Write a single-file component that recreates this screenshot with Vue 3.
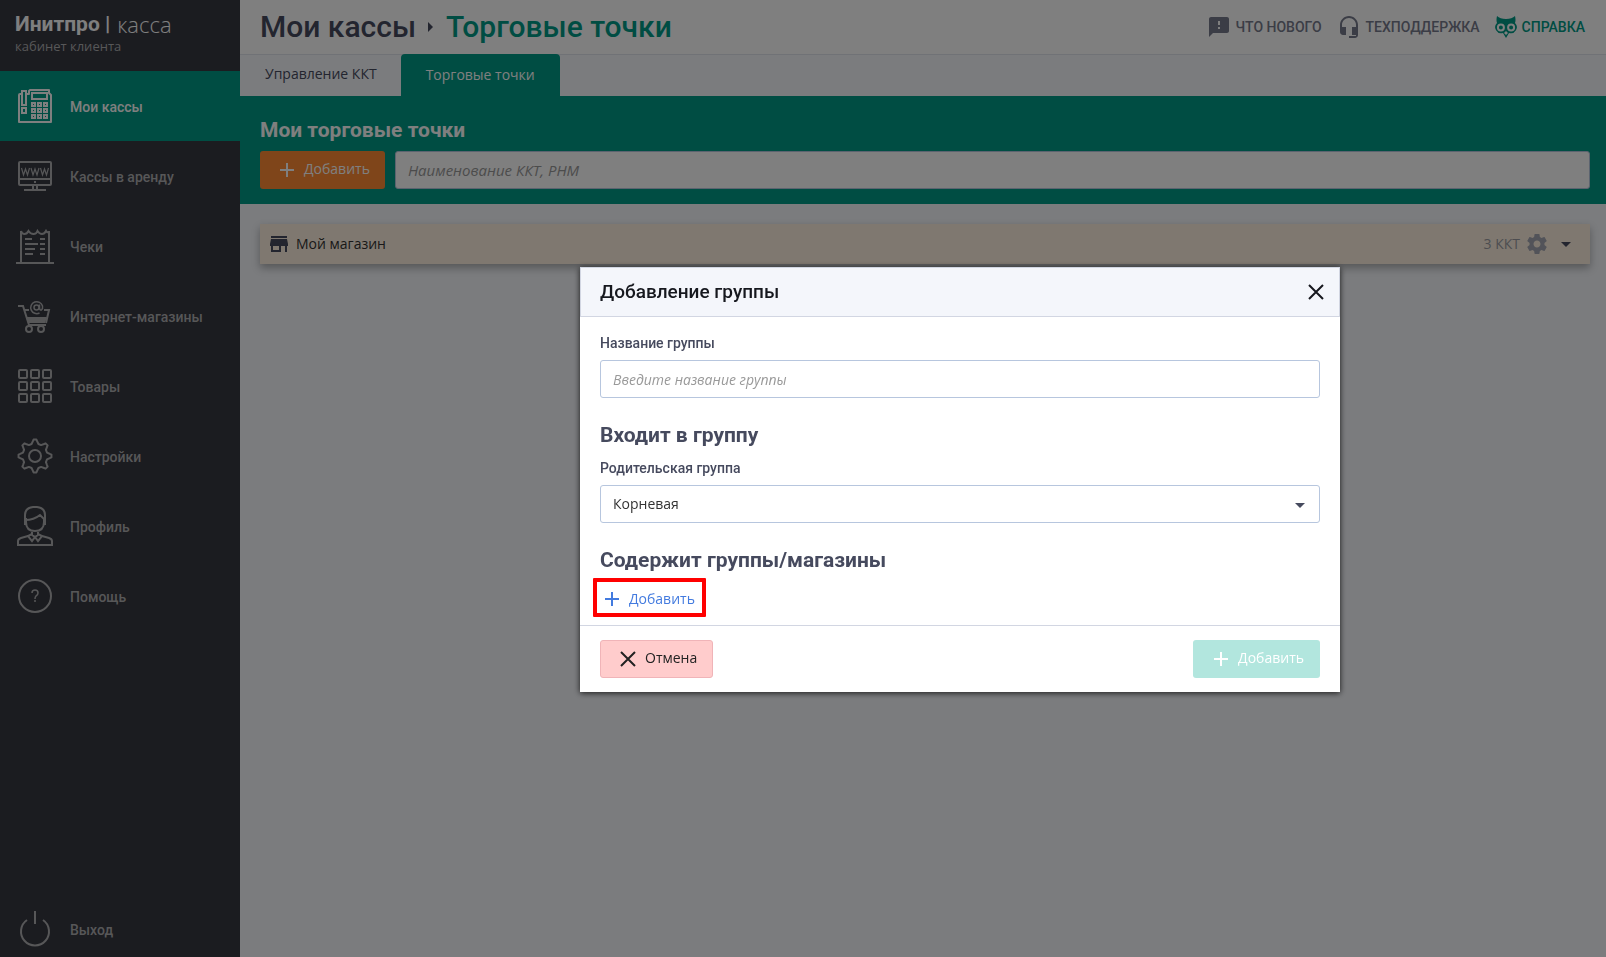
<script setup>
import { ref } from 'vue'

const menu = [
  { id: 'kassa', label: 'Мои кассы', active: true },
  { id: 'rent', label: 'Кассы в аренду' },
  { id: 'receipt', label: 'Чеки' },
  { id: 'cart', label: 'Интернет-магазины' },
  { id: 'grid', label: 'Товары' },
  { id: 'gear', label: 'Настройки' },
  { id: 'user', label: 'Профиль' },
  { id: 'help', label: 'Помощь' },
  { id: 'exit', label: 'Выход' },
]
const cells = [1, 13, 25]
const keys = [14, 20, 26]
const keyRows = [14, 20, 26]

// Outline of an eight-toothed gear around (19, 20).
const gearPoints = Array.from({ length: 8 }, (_, k) =>
  [[-16, 12.5], [-8, 15], [-5, 16.5], [5, 16.5], [8, 15], [16, 12.5]].map(([offset, r]) => {
    const a = ((k * 45 + offset) * Math.PI) / 180
    return `${(19 + r * Math.cos(a)).toFixed(2)},${(20 + r * Math.sin(a)).toFixed(2)}`
  }).join(' ')
).join(' ')

const search = ref('')
const groupName = ref('')
const parent = ref('root')
</script>

<template>
  <div class="app">
    <aside class="sidebar">
      <div class="brand">
        <div class="brand-name"><b>Инитпро |</b><span>касса</span></div>
        <div class="brand-sub">кабинет клиента</div>
      </div>
      <nav class="menu">
        <a v-for="m in menu" :key="m.id" href="#" class="menu-item" :class="{ active: m.active, exit: m.id === 'exit' }">
          <svg class="menu-icon" viewBox="0 0 38 40" fill="none" stroke="currentColor" stroke-width="2">
            <g v-if="m.id === 'kassa'">
              <path d="M6 8H4a1 1 0 0 0-1 1v27h32V9l-2-2V4H14l-1 1v3h-3" stroke-linejoin="round" />
              <rect x="6" y="5" width="4" height="14" /><rect x="6" y="22" width="4" height="5" />
              <rect x="16" y="7" width="15" height="6" />
              <template v-for="y in keyRows" :key="y"><rect v-for="x in keys" :key="x" :x="x + 2" :y="y + 3" width="3" height="3" /></template>
            </g>
            <g v-else-if="m.id === 'rent'">
              <rect x="3" y="6" width="32" height="23" rx="1" /><path d="M3 23h32M17 29v5M21 29v5M8 34h22M18 26h2" />
              <path d="M5.500 12l2 7 2-6 2 6 2-7M15 12l2 7 2-6 2 6 2-7M24.500 12l2 7 2-6 2 6 2-7" stroke-width="1.200" />
            </g>
            <g v-else-if="m.id === 'receipt'">
              <path d="M0 37h38M5 37V5M33 37V5M5 5q1 3 3.500 3t4-3q2 3 5 3t4-3q2 3 4.500 3t4-3q1 2 3 1M9 13h7M24 13h5M9 18h13M24 18h5M9 23h10M24 23h5M9 28h8M24 28h5" />
            </g>
            <g v-else-if="m.id === 'cart'">
              <path d="M2 10h5l6 19h17M8 14h5M28 14h5l-3 13" /><path d="M10 21h21l-2 6H12z" fill="currentColor" stroke="none" />
              <circle cx="13" cy="33" r="3" /><circle cx="25" cy="33" r="3" />
              <circle cx="20.500" cy="11.500" r="2.500" stroke-width="1.500" />
              <path d="M23.500 8.500v4q.500 2 2 1.500 1.500-1 1-4a6 6 0 1 0-3 7" stroke-width="1.500" />
            </g>
            <g v-else-if="m.id === 'grid'">
              <template v-for="y in cells" :key="y"><rect v-for="x in cells" :key="x" :x="x + 2" :y="y + 3" width="8" height="8" rx="1" /></template>
            </g>
            <g v-else-if="m.id === 'gear'" stroke-linejoin="round">
              <circle cx="19" cy="20" r="6" /><polygon :points="gearPoints" />
            </g>
            <g v-else-if="m.id === 'user'">
              <path d="M9 19V9q0-7 8-8h4q8 1 8 8v10M9 14q9 0 15-5l4 4M10 14v2q0 9 9 9t9-9v-3M16 24v5l3 2 3-2v-5M16 28l-4 2 4 5 3-4 3 4 4-5-4-2M12 30L5 32q-3 1-3 3v4h34v-4q0-2-3-3l-7-2" />
              <path d="M10 12v7M28 12v7" />
            </g>
            <g v-else-if="m.id === 'help'">
              <circle cx="19" cy="20" r="16" />
              <path d="M16 17q0-3 3-3t3 3q0 2-2 3-1 1-1 3M19 24v2" stroke-width="1.500" />
            </g>
            <g v-else><path d="M19 2v13M11 11a14 14 0 1 0 16 0" /></g>
          </svg>
          <span class="menu-label">{{ m.label }}</span>
        </a>
      </nav>
    </aside>

    <main class="main">
      <header class="header">
        <h1 class="crumbs">
          <span>Мои кассы</span>
          <svg width="6" height="10" viewBox="0 0 6 10"><path d="M0 0l5 5-5 5z" fill="currentColor" /></svg>
          <span class="crumb-current">Торговые точки</span>
        </h1>
        <div class="tools">
          <a href="#" class="tool">
            <svg width="24" height="24" viewBox="0 0 24 24" fill="currentColor"><path d="M20 2H4c-1.100 0-1.990.900-1.990 2L2 22l4-4h14c1.100 0 2-.900 2-2V4c0-1.100-.900-2-2-2zm-7 8h-2V6h2v4zm0 4h-2v-2h2v2z" /></svg>
            <span>ЧТО НОВОГО</span>
          </a>
          <a href="#" class="tool">
            <svg width="24" height="24" viewBox="0 0 24 24" fill="currentColor"><path d="M12 1c-4.970 0-9 4.030-9 9v7c0 1.660 1.340 3 3 3h3v-8H5v-2c0-3.870 3.130-7 7-7s7 3.130 7 7v2h-4v8h4v1h-7v2h6c1.660 0 3-1.340 3-3V10c0-4.970-4.030-9-9-9z" /></svg>
            <span>ТЕХПОДДЕРЖКА</span>
          </a>
          <a href="#" class="tool accent">
            <svg width="22" height="24" viewBox="0 0 22 24" fill="currentColor">
              <path d="M2 1q3 3 9 3t9-3q1 4 0 7a6 6 0 0 1-6 10l-3 5-3-5A6 6 0 0 1 2 8q-1-3 0-7z" />
              <g fill="none" stroke="#fff" stroke-width="2"><circle cx="5.900" cy="12.500" r="3" /><circle cx="16.100" cy="12.500" r="3" /></g>
              <path d="M11 16l2 2-2 2-2-2z" fill="#fff" />
            </svg>
            <span>СПРАВКА</span>
          </a>
        </div>
      </header>

      <nav class="tabs">
        <a href="#" class="tab">Управление ККТ</a>
        <a href="#" class="tab current">Торговые точки</a>
      </nav>

      <section class="panel">
        <h2>Мои торговые точки</h2>
        <div class="panel-row">
          <button type="button" class="btn orange">
            <svg class="sign" viewBox="0 0 14 14"><path d="M7 0v14M0 7h14" /></svg><span>Добавить</span>
          </button>
          <input v-model="search" class="field" type="text" placeholder="Наименование ККТ, РНМ" aria-label="Поиск" />
        </div>
      </section>

      <section class="list">
        <div class="shop">
          <svg width="24" height="24" viewBox="0 0 24 24" fill="currentColor"><path d="M20 4H4v2h16V4zm1 10v-2l-1-5H4l-1 5v2h1v6h10v-6h4v6h2v-6h1zm-9 4H6v-4h6v4z" /></svg>
          <span class="shop-name">Мой магазин</span>
          <span class="shop-count">3 ККТ</span>
          <button type="button" class="icon-btn muted" aria-label="Настроить">
            <svg width="24" height="24" viewBox="0 0 24 24" fill="currentColor"><path d="M19.430 12.980c.040-.320.070-.640.070-.980s-.030-.660-.070-.980l2.110-1.650c.190-.150.240-.420.120-.640l-2-3.460c-.120-.220-.390-.300-.610-.220l-2.490 1c-.520-.400-1.080-.730-1.690-.980l-.380-2.650C14.460 2.180 14.250 2 14 2h-4c-.250 0-.460.180-.490.420l-.380 2.650c-.610.250-1.170.590-1.690.980l-2.490-1c-.230-.090-.490 0-.610.220l-2 3.460c-.130.220-.070.490.120.640l2.110 1.650c-.040.320-.070.650-.070.980s.030.660.070.980l-2.110 1.650c-.190.150-.240.420-.120.640l2 3.460c.120.220.390.300.610.220l2.490-1c.520.400 1.080.730 1.690.980l.380 2.650c.030.240.240.420.490.420h4c.250 0 .460-.180.490-.420l.380-2.650c.610-.250 1.170-.590 1.690-.980l2.490 1c.230.090.490 0 .610-.220l2-3.460c.120-.220.070-.490-.120-.640l-2.110-1.650zM12 15.500c-1.930 0-3.500-1.570-3.500-3.500s1.570-3.500 3.500-3.500 3.500 1.570 3.500 3.500-1.570 3.500-3.500 3.500z" /></svg>
          </button>
          <button type="button" class="icon-btn expand" aria-label="Развернуть">
            <svg width="10" height="5" viewBox="0 0 10 5"><path d="M0 0h10L5 5z" fill="currentColor" /></svg>
          </button>
        </div>
      </section>
    </main>

    <div class="overlay">
      <form class="modal" role="dialog" aria-labelledby="dlg-title" @submit.prevent>
        <header class="modal-head">
          <h2 id="dlg-title">Добавление группы</h2>
          <button type="button" class="icon-btn" aria-label="Закрыть">
            <svg class="sign" viewBox="0 0 14 14"><path d="M0 0l14 14M14 0L0 14" /></svg>
          </button>
        </header>
        <div class="modal-body">
          <label for="group-name">Название группы</label>
          <input id="group-name" v-model="groupName" class="field" type="text" placeholder="Введите название группы" />
          <h3>Входит в группу</h3>
          <label for="group-parent">Родительская группа</label>
          <div class="select">
            <select id="group-parent" v-model="parent" class="field"><option value="root">Корневая</option></select>
            <svg width="10" height="5" viewBox="0 0 10 5"><path d="M0 0h10L5 5z" fill="currentColor" /></svg>
          </div>
          <h3>Содержит группы/магазины</h3>
          <button type="button" class="link-btn">
            <svg class="sign" viewBox="0 0 14 14"><path d="M7 0v14M0 7h14" /></svg><span>Добавить</span>
          </button>
        </div>
        <footer class="modal-foot">
          <button type="button" class="btn cancel">
            <svg class="sign" viewBox="0 0 14 14"><path d="M0 0l14 14M14 0L0 14" /></svg><span>Отмена</span>
          </button>
          <button type="submit" class="btn submit" disabled>
            <svg class="sign" viewBox="0 0 14 14"><path d="M7 0v14M0 7h14" /></svg><span>Добавить</span>
          </button>
        </footer>
      </form>
    </div>
  </div>
</template>

<style>
body { margin: 0; }
</style>

<style scoped>
* { box-sizing: border-box; }
.app {
  display: flex;
  min-height: 100vh;
  background: #f6f8fc;
  color: #464a5e;
  font: 14px/20px "Open Sans", sans-serif;
}
a { text-decoration: none; color: inherit; }
h1, h2, h3 { margin: 0; font-family: Roboto, sans-serif; }
button { font: inherit; cursor: pointer; }

.sidebar { display: flex; flex-direction: column; flex: 0 0 240px; background: #363841; color: #aeaeb0; }
.brand { height: 71px; padding: 12px 15px; }
.brand-name { display: flex; gap: 7px; font: 21px/24px Roboto, sans-serif; color: #fff; white-space: nowrap; }
.brand-name span { font: 300 22px/24px "Open Sans", sans-serif; }
.brand-sub { font-size: 13px; line-height: 20px; }
.menu { display: flex; flex-direction: column; flex: 1; }
.menu-item {
  display: flex;
  align-items: center;
  gap: 16px;
  height: 70px;
  padding: 0 16px;
  font: 500 14px/20px Roboto, sans-serif;
}
.menu-label { padding-top: 2px; }
.menu-item.active { background: #009a86; color: #fff; }
.menu-item.exit { height: 56px; margin-top: auto; }
.menu-icon { width: 38px; height: 40px; }

.main { flex: 1; min-width: 0; }
.header {
  display: flex;
  align-items: center;
  justify-content: space-between;
  height: 55px;
  padding: 0 21px 0 20px;
  background: #fff;
  border-bottom: 1px solid #e0e4ec;
}
.crumbs { display: flex; align-items: center; gap: 12px; font-size: 30px; font-weight: 500; line-height: 36px; }
.crumb-current { color: #009a86; }
.tools { display: flex; gap: 15px; font: 500 14px/20px Roboto, sans-serif; color: #777b8c; }
.tool { display: flex; align-items: center; gap: 5px; }
.tool.accent { color: #009a86; }

.tabs { display: flex; height: 41px; }
.tab { padding: 9px 24px 9px 25px; }
.tab.current { margin-top: -1px; padding: 11px 25px; background: #009a86; color: #fff; border-radius: 4px 4px 0 0; }
.panel { padding: 21px 16px 15px 20px; background: #009a86; }
.panel h2 { color: #fff; font-size: 21px; line-height: 26px; margin-bottom: 8px; }
.panel-row { display: flex; gap: 10px; }
.panel-row .field { font-size: 15px; }

.btn {
  display: flex;
  align-items: center;
  gap: 10px;
  height: 38px;
  padding: 0 15px 0 20px;
  border: 1px solid transparent;
  border-radius: 3px;
  white-space: nowrap;
}
.btn span { padding-bottom: 2px; }
.sign { width: 14px; height: 14px; overflow: visible; fill: none; stroke: currentColor; stroke-width: 2; }
.orange { padding: 0 14px 0 19px; background: #ff8a34; color: #fff; }
.cancel { background: #ffcccc; border-color: #f0b4b8; color: #222; }
.submit { background: #b2e6de; color: #fff; }
.field {
  display: block;
  width: 100%;
  height: 38px;
  padding: 0 12px;
  border: 1px solid #b7c6de;
  border-radius: 3px;
  background: #fff;
  color: #333;
  font: inherit;
}
.field::placeholder { color: #999; font-style: italic; opacity: 1; }

.list { padding: 20px 16px 20px 20px; }
.shop {
  display: flex;
  align-items: center;
  height: 40px;
  padding: 0 14px 0 7px;
  background: #fff1e0;
  box-shadow: 0 4px 8px rgba(0, 0, 0, 0.3);
}
.shop-name { flex: 1; margin-left: 5px; color: #333; }
.shop-count { margin-right: 5px; color: #9a9ba0; }
.icon-btn { display: flex; align-items: center; padding: 0; border: 0; background: none; color: inherit; }
.icon-btn.muted { margin-right: 7px; color: #a4a7b2; }
.icon-btn.expand { padding: 5px; }

/* The dialog is centred a little to the right of the workspace axis. */
.overlay {
  position: fixed;
  inset: 0;
  display: flex;
  align-items: center;
  justify-content: center;
  padding: 2px 0 0 314px;
  background: rgba(0, 0, 0, 0.5);
}
.modal { width: 760px; background: #fff; box-shadow: 0 1px 6px rgba(0, 0, 0, 0.8); }
.modal-head {
  display: flex;
  align-items: center;
  justify-content: space-between;
  height: 50px;
  padding: 0 16px 0 19px;
  border: 1px solid #d2d6e2;
  background: #f4f6fb;
  color: #16181e;
}
.modal-head h2 { font-size: 19px; font-weight: 500; line-height: 24px; }
.modal-body { padding: 16px 20px 8px; }
.modal-body label { display: block; margin-bottom: 7px; font: 500 14px/20px Roboto, sans-serif; }
.modal-body h3 { margin: 25px 0 11px; font-size: 21px; line-height: 24px; }
.modal-body h3:last-of-type { margin-bottom: 9px; }
.select { position: relative; }
.select .field { appearance: none; }
.select svg { position: absolute; right: 15px; top: 18px; pointer-events: none; }
.link-btn {
  position: relative;
  display: flex;
  align-items: center;
  gap: 10px;
  height: 36px;
  padding: 0 5px;
  border: 0;
  background: none;
  color: #437bdf;
}
.link-btn::after {
  content: "";
  position: absolute;
  inset: -3px -6px 0 -7px;
  border: 4px solid #f00;
  border-radius: 1px;
}
.modal-foot { display: flex; justify-content: space-between; padding: 14px 20px; border-top: 1px solid #d2d6e2; }
</style>
